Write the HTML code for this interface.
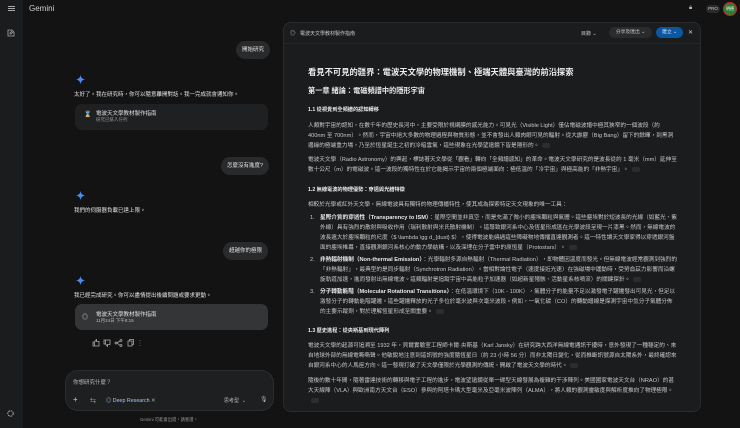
<!DOCTYPE html>
<html><head><meta charset="utf-8"><style>
*{margin:0;padding:0;box-sizing:border-box}
body{width:740px;height:428px;overflow:hidden;background:#131314;color:#e3e3e3;font-family:"Liberation Sans","Noto Sans CJK TC",sans-serif;position:relative}
.a{position:absolute;white-space:nowrap}
.side{position:absolute;left:0;top:0;width:23px;height:428px;background:#1b1c1d}
.bub{position:absolute;background:#282a2c;border-radius:9px;font-size:5.5px;color:#e3e3e3;height:18px;line-height:18px;padding:0 6px}
.card{position:absolute;left:75px;width:193px;height:26px;border-radius:7px;background:#1f2022}
.card2{background:#333537}
.spk{position:absolute;width:9px;height:9px}
.t{font-size:5.5px;color:#e3e3e3}
.panel{position:absolute;left:283px;top:22px;width:418px;height:390px;background:#1b1c1d;border-radius:8px;border:1px solid #2a2b2d}
.doc{position:absolute;left:308px;width:369px;font-size:5.65px;line-height:10px;color:#c8c8c8;white-space:normal}
.h{position:absolute;left:308px;font-weight:bold;color:#ececec;white-space:nowrap}
.li{position:absolute;left:320px;width:357px;font-size:5.65px;line-height:10px;color:#c8c8c8}
.li b{color:#e8e8e8}
.n{position:absolute;left:-10px;top:0}
.chip{display:inline-block;width:8px;height:5px;border-radius:2px;background:#2c2d2f;vertical-align:middle;margin-left:3px}
</style></head><body>
<div class="side"></div>
<div class="a" style="left:8px;top:6px;width:7px;height:1px;background:#aaa;box-shadow:0 2px 0 #aaa,0 4px 0 #aaa"></div>
<svg class="a" style="left:7px;top:29px" width="8" height="8" viewBox="0 0 8 8"><path d="M6 1 3 4v1h1l3-3M5 1H1v6h6V3" stroke="#aaa" fill="none" stroke-width=".8"/></svg>
<svg class="a" style="left:6px;top:409px" width="9" height="9" viewBox="0 0 10 10"><circle cx="5" cy="5" r="3" stroke="#aaa" fill="none" stroke-width="1.1" stroke-dasharray="2 .8"/></svg>
<div class="a" style="left:29px;top:4px;font-size:8px;color:#d0d0d0">Gemini</div>

<div class="bub" style="left:236px;top:41px">開始研究</div>
<svg class="spk" style="left:76px;top:75px" viewBox="0 0 10 10"><path d="M5 0Q5.6 4.4 10 5Q5.6 5.6 5 10Q4.4 5.6 0 5Q4.4 4.4 5 0Z" fill="#4a8cf2"/></svg>
<div class="a t" style="left:74px;top:90px">太好了。我在研究時，你可以隨意離開對話。我一完成就會通知你。</div>
<div class="card" style="top:104px"></div>
<div class="a" style="left:84px;top:111px;font-size:6px;color:#bbb">⌛</div>
<div class="a t" style="left:96px;top:109px">電波天文學教材製作指南</div>
<div class="a" style="left:96px;top:117px;font-size:4.5px;color:#999">研究已排入佇列</div>
<div class="bub" style="left:221px;top:157px">怎麼沒有進度?</div>
<svg class="spk" style="left:76px;top:191px" viewBox="0 0 10 10"><path d="M5 0Q5.6 4.4 10 5Q5.6 5.6 5 10Q4.4 5.6 0 5Q4.4 4.4 5 0Z" fill="#4a8cf2"/></svg>
<div class="a t" style="left:74px;top:206px">我們的伺服器負載已達上限。</div>
<div class="bub" style="left:223px;top:242px">超越你的極限</div>
<svg class="spk" style="left:76px;top:276px" viewBox="0 0 10 10"><path d="M5 0Q5.6 4.4 10 5Q5.6 5.6 5 10Q4.4 5.6 0 5Q4.4 4.4 5 0Z" fill="#4a8cf2"/></svg>
<div class="a t" style="left:74px;top:291px">我已經完成研究。你可以盡情提出後續問題或要求更動。</div>
<div class="card card2" style="top:304px"></div>
<div class="a" style="left:82px;top:312px;font-size:6px;color:#ccc">◎</div>
<div class="a t" style="left:96px;top:310px">電波天文學教材製作指南</div>
<div class="a" style="left:96px;top:318px;font-size:4.5px;color:#bbb">11月24日 下午8:19</div>
<svg class="a" style="left:92px;top:339px" width="52" height="8" viewBox="0 0 52 8" fill="none" stroke="#aaa" stroke-width=".8"><path d="M1 3h1.5v4H1zM2.5 3l2-2.5v2h2.5v4.5H2.5"/><path d="M12 5h1.5V1H12zM13.5 5l2 2.5v-2h2.5V1h-4.5"/><circle cx="29" cy="1.5" r="1"/><circle cx="24" cy="4" r="1"/><circle cx="29" cy="6.5" r="1"/><path d="M25 4l3-2M25 4l3 2.5"/><rect x="36" y="2" width="4" height="5"/><path d="M37.5 2V.5h4v5H40"/><path d="M48 1v.6M48 3.7v.6M48 6.4v.6"/></svg>

<div class="a" style="left:65px;top:370px;width:209px;height:41px;border-radius:13px;background:#1e1f20;border:1px solid #2b2c2e"></div>
<div class="a" style="left:73px;top:378px;font-size:5.5px;color:#bbb">你想研究什麼？</div>
<div class="a" style="left:73px;top:395px;font-size:8px;color:#ccc">+</div>
<div class="a" style="left:90px;top:396px;font-size:6px;color:#aaa">⇆</div>
<div class="a" style="left:106px;top:396px;font-size:5.3px;color:#a8c7fa">◎ Deep Research <span style="color:#aaa">✕</span></div>
<div class="a" style="left:224px;top:397px;font-size:5px;color:#bbb">思考型 &nbsp;⌄</div>
<div class="a" style="left:260px;top:396px;font-size:6px;color:#bbb">🎙︎</div>
<div class="a" style="left:140px;top:417px;font-size:4.3px;color:#999">Gemini 可能會出錯，請查證。</div>

<div class="a" style="left:689px;top:5px;font-size:6px;color:#bbb">🔒︎</div>
<div class="a" style="left:706px;top:5px;width:14px;height:8px;border-radius:4px;background:#2a2b2d;font-size:4.5px;line-height:8px;text-align:center;color:#ccc">PRO</div>
<div class="a" style="left:723px;top:2px;width:14px;height:14px;border-radius:50%;background:#2e7d32;border:1px solid #c62828;font-size:4px;line-height:12px;text-align:center;color:#fff">明德</div>

<div class="panel"></div>
<div class="a" style="left:283px;top:43px;width:418px;height:1px;background:#252628"></div>
<div class="a" style="left:290px;top:29px;font-size:5.5px;color:#ccc">◎</div>
<div class="a" style="left:300px;top:30px;font-size:5px;color:#ccc">電波天文學教材製作指南</div>
<div class="a" style="left:581px;top:30px;font-size:5px;color:#ccc">目錄 ⌄</div>
<div class="a" style="left:609px;top:27px;width:43px;height:11px;border-radius:6px;background:#2a2b2d;font-size:4.8px;line-height:11px;text-align:center;color:#ccc">分享及匯出 ⌄</div>
<div class="a" style="left:656px;top:27px;width:27px;height:11px;border-radius:6px;background:#0b57a0;font-size:4.8px;line-height:11px;text-align:center;color:#e0ecff">建立 ⌄</div>
<div class="a" style="left:688px;top:29px;font-size:6px;color:#ccc">✕</div>

<div class="h" style="top:66px;font-size:8.3px">看見不可見的疆界：電波天文學的物理機制、極端天體與臺灣的前沿探索</div>
<div class="h" style="top:86px;font-size:7.2px">第一章 緒論：電磁頻譜中的隱形宇宙</div>
<div class="h" style="top:106px;font-size:5.2px">1.1 從視覺到全頻譜的認知轉移</div>
<div class="doc" style="top:121px">人類對宇宙的認知，在數千年的歷史長河中，主要受限於視網膜的感光能力。可見光（Visible Light）僅佔電磁波譜中極其狹窄的一個波段（約 400nm 至 700nm）。然而，宇宙中絕大多數的物理過程與物質形態，並不會發出人類肉眼可見的輻射。從大霹靂（Big Bang）留下的餘暉，到黑洞邊緣的極端重力場，乃至於恆星誕生之初的冷暗雲氣，這些現象在光學望遠鏡下皆是隱形的。<span class="chip"></span></div>
<div class="doc" style="top:155px">電波天文學（Radio Astronomy）的興起，標誌著天文學從「觀看」轉向「全頻譜感知」的革命。電波天文學研究的是波長從約 1 毫米（mm）延伸至數十公尺（m）的電磁波。這一波段的獨特性在於它能揭示宇宙的兩個極端面向：極低溫的「冷宇宙」與極高能的「非熱宇宙」。<span class="chip"></span></div>
<div class="h" style="top:186px;font-size:5.2px">1.2 無線電波的物理優勢：穿透與光譜特徵</div>
<div class="doc" style="top:200px">相較於光學或紅外天文學，無線電波具有獨特的物理傳播特性，使其成為探索特定天文現象的唯一工具：</div>
<div class="li" style="top:213px"><span class="n">1.</span><b>星際介質的穿透性（Transparency to ISM）</b>：星際空間並非真空，而是充滿了微小的塵埃顆粒與氣體。這些塵埃對於短波長的光線（如藍光、紫外線）具有強烈的散射與吸收作用（瑞利散射與米氏散射機制）。這導致銀河系中心及恆星形成區在光學波段呈現一片漆黑。然而，無線電波的波長遠大於塵埃顆粒的尺度（$ \lambda \gg d_{dust} $），使得電波能繞過這些障礙物地傳播直達觀測者。這一特性讓天文學家得以穿透銀河盤面的塵埃帷幕，直接觀測銀河系核心的動力學結構，以及深埋在分子雲中的原恆星（Protostars）。<span class="chip"></span></div>
<div class="li" style="top:255px"><span class="n">2.</span><b>非熱輻射機制（Non-thermal Emission）</b>：光學輻射多源自熱輻射（Thermal Radiation），即物體因溫度而發光。但無線電波經常觀測到強烈的「非熱輻射」，最典型的是同步輻射（Synchrotron Radiation）。當相對論性電子（速度接近光速）在強磁場中運動時，受勞侖茲力影響而沿螺旋軌道加速，進而發射出無線電波。這類輻射是追蹤宇宙中高能粒子加速器（如超新星殘骸、活動星系核噴流）的關鍵探針。<span class="chip"></span></div>
<div class="li" style="top:287px"><span class="n">3.</span><b>分子轉動能階（Molecular Rotational Transitions）</b>：在低溫環境下（10K - 100K），氣體分子的能量不足以激發電子躍遷發出可見光，但足以激發分子的轉動能階躍遷。這些躍遷釋放的光子多位於毫米波與次毫米波段。例如，一氧化碳（CO）的轉動譜線是探測宇宙中氫分子氣體分佈的主要示蹤劑，對於理解恆星形成至關重要。<span class="chip"></span></div>
<div class="h" style="top:327px;font-size:5.2px">1.3 歷史進程：從央斯基到現代陣列</div>
<div class="doc" style="top:341px">電波天文學的起源可追溯至 1932 年，貝爾實驗室工程師卡爾·央斯基（Karl Jansky）在研究跨大西洋無線電通訊干擾時，意外發現了一種穩定的、來自地球外部的無線電嘶嘶聲。他敏銳地注意到這訊號的強度隨恆星日（約 23 小時 56 分）而非太陽日變化，從而推斷訊號源自太陽系外，最終確認來自銀河系中心的人馬座方向。這一發現打破了天文學僅限於光學觀測的傳統，開啟了電波天文學的時代。<span class="chip"></span></div>
<div class="doc" style="top:376px">隨後的數十年間，隨著雷達技術的轉移與電子工程的進步，電波望遠鏡從單一碟型天線發展為複雜的干涉陣列。美國國家電波天文台（NRAO）的甚大天線陣（VLA）與歐洲南方天文台（ESO）參與的阿塔卡瑪大型毫米及亞毫米波陣列（ALMA），將人類的觀測靈敏度與解析度推向了物理極限。<span class="chip"></span></div>
</body></html>
